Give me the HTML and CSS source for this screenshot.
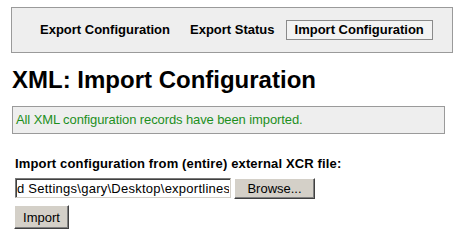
FILE: index.html
```html
<!DOCTYPE html>
<html lang="en">
<head>
  <meta charset="UTF-8" />
  <title>XML: Import Configuration</title>
  <link rel="stylesheet" href="styles.css">
</head>
<body>
  <nav class="tabs">
    <a href="#" class="tab">Export Configuration</a>
    <a href="#" class="tab">Export Status</a>
    <a href="#" class="tab active">Import Configuration</a>
  </nav>

  <h1>XML: Import Configuration</h1>

  <div class="message">All XML configuration records have been imported.</div>

  <form class="import-form">
    <label for="xcrFile">Import configuration from (entire) external XCR file:</label>
    <div class="file-row">
      <input id="xcrFile" type="text" value="d Settings\gary\Desktop\exportlines" />
      <button type="button" class="btn browse">Browse...</button>
    </div>
    <button type="submit" class="btn">Import</button>
  </form>
</body>
</html>
```

FILE: styles.css
```css
body {
  margin: 0;
  font-family: "Liberation Sans", Arial, sans-serif;
  font-size: 13px;
  color: #000;
  background: #fff;
}

.tabs {
  display: flex;
  gap: 2px;
  margin: 7px 10px 0 11px;
  padding: 12px 0 12px 19px;
  background: #eeeeee;
  border: 1px solid #9a9a9a;
}

.tab {
  flex: none;
  padding: 0 8px;
  line-height: 18px;
  white-space: nowrap;
  border: 1px solid transparent;
  font-weight: bold;
  color: #000;
  text-decoration: none;
}

.tab.active {
  border-color: #8a8a8a;
  background: #f3f3f3;
}

h1 {
  margin: 13px 12px 12px;
  font-size: 24px;
  line-height: 28px;
}

.message {
  margin: 0 18px 0 12px;
  padding: 5px 3px;
  line-height: 16px;
  letter-spacing: -0.1px;
  color: #1d8f1d;
  background: #eeeeee;
  border: 1px solid #9a9a9a;
}

.import-form {
  margin: 22px 0 0 15px;
}

.import-form label {
  display: block;
  font-weight: bold;
  line-height: 16px;
  letter-spacing: 0.15px;
}

.file-row {
  display: flex;
  gap: 3px;
  margin: 6px 0 6px;
}

.file-row input {
  box-sizing: border-box;
  width: 216px;
  height: 20px;
  padding: 0 1px;
  font: 13px "Liberation Sans", Arial, sans-serif;
  letter-spacing: 0.25px;
  color: #000;
  border: 1px solid;
  border-color: #7a7a7a #d4d0c8 #d4d0c8 #7a7a7a;
  box-shadow: inset 1px 1px #404040;
  outline: none;
}

.btn {
  box-sizing: border-box;
  height: 24px;
  padding: 0 5px;
  font: 13px "Liberation Sans", Arial, sans-serif;
  color: #000;
  background: #d4d0c8;
  border: 1px solid;
  border-color: #fff #404040 #404040 #fff;
  box-shadow: inset -1px -1px #808080;
  margin-left: -1px;
  width: 55px;
}

.btn.browse {
  margin-left: 0;
  width: 81px;
  height: 21px;
}
```
